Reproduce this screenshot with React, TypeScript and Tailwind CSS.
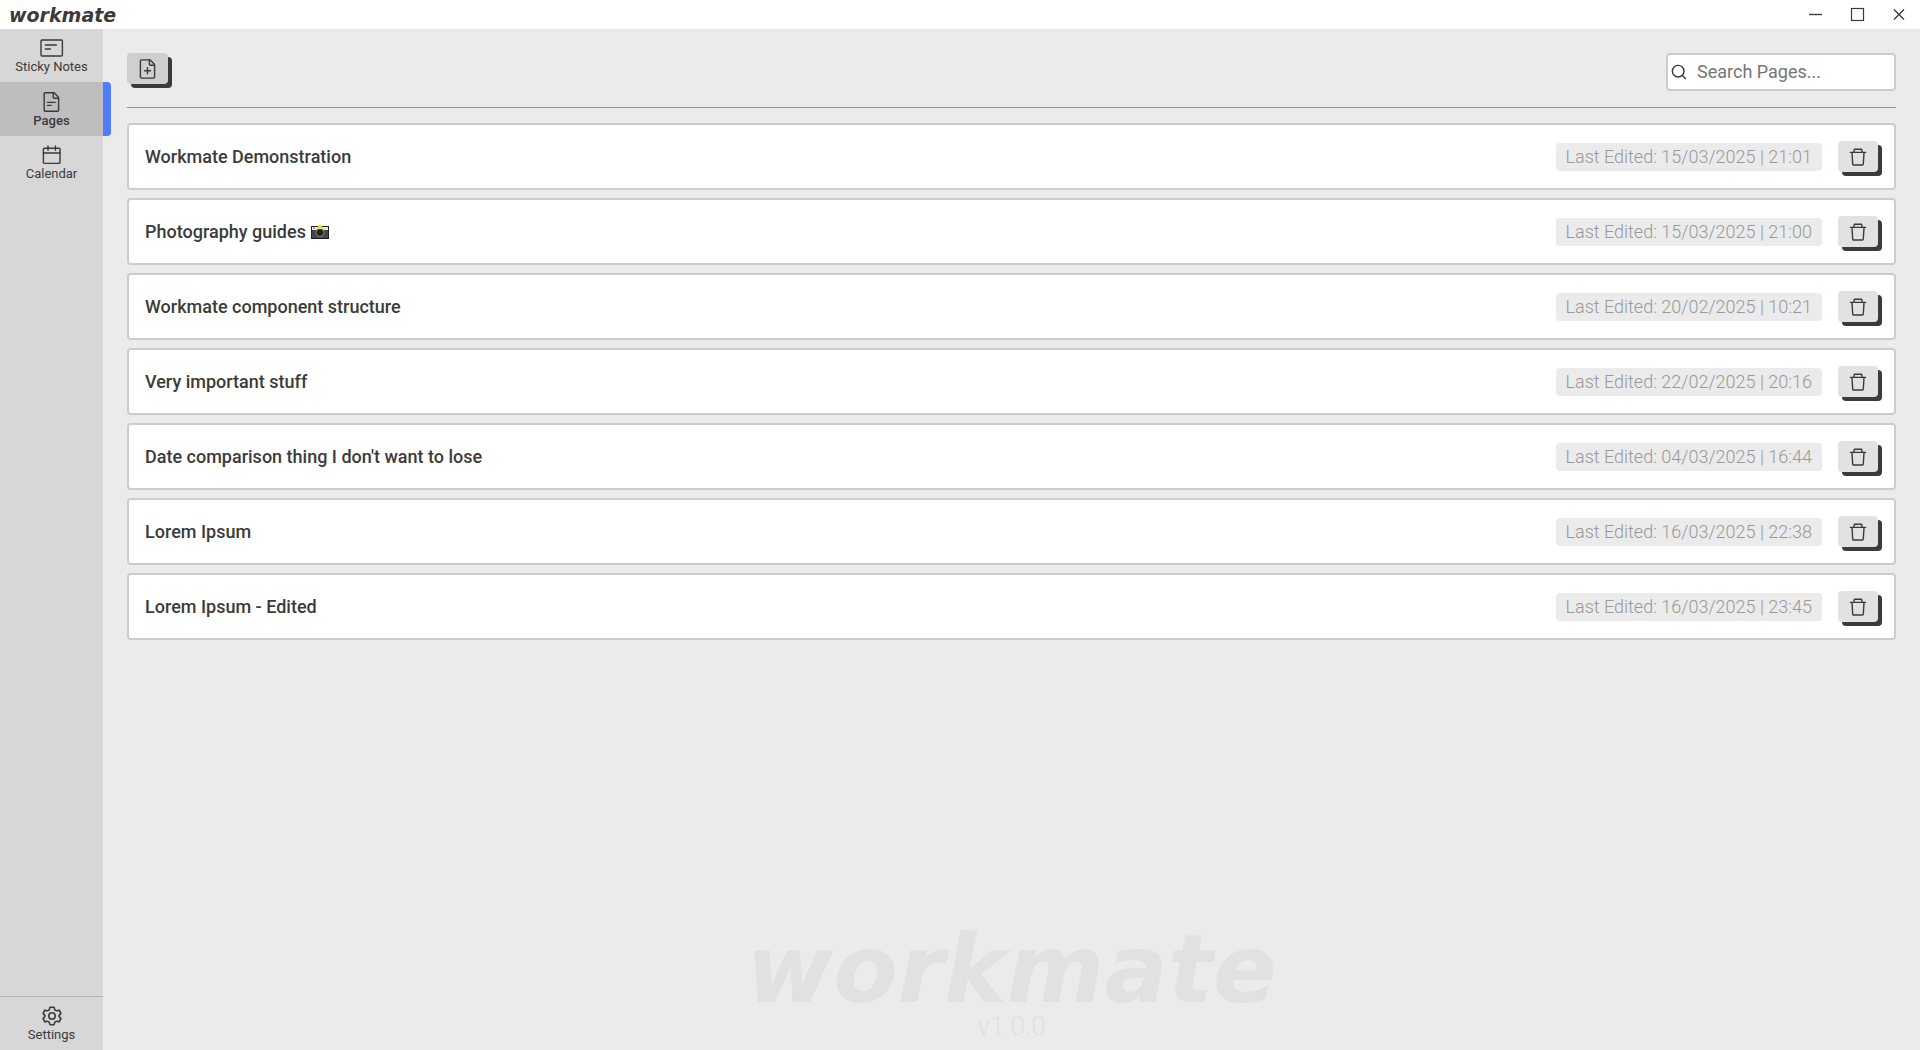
import React from "react";

const iconProps = {
  fill: "none",
  stroke: "currentColor",
  strokeWidth: 1.4,
  strokeLinecap: "round" as const,
  strokeLinejoin: "round" as const,
  "aria-hidden": true,
};

const StickyIcon = () => (
  <svg width="24" height="20" viewBox="0 0 24 20" {...iconProps}>
    <rect x="1" y="2" width="21.4" height="16" rx="1" />
    <path d="M5.4 7h11M5.4 11h5" />
  </svg>
);

const PageIcon = () => (
  <svg width="20" height="20" viewBox="0 0 20 20" {...iconProps}>
    <path d="M3.2.8h9l4.4 4.6v12.8a1 1 0 0 1-1 1H3.2a1 1 0 0 1-1-1V1.8a1 1 0 0 1 1-1z" />
    <path d="M11.2 1v4.2a1 1 0 0 0 1 1h4.2M5.6 10.4h7.6M5.6 13.4h3.6" />
  </svg>
);

const CalendarIcon = () => (
  <svg width="20" height="20" viewBox="0 0 20 20" {...iconProps}>
    <rect x="1.4" y="3.2" width="16.6" height="15.2" rx="1" />
    <path d="M1.4 8h16.6M6 1v4.2M13.4 1v4.2" />
  </svg>
);

const GearIcon = () => (
  <svg width="20" height="20" viewBox="0 0 20 20" {...iconProps} strokeWidth={1.6}>
    <circle cx="10" cy="10" r="3.2" />
    <path d="M8.4 1.2h3.2q.5 0 .6.6l.4 1.6q.1.4.5.6l1 .6q.4.2.8.1l1.6-.5q.5-.2.8.3l1.4 2.5q.3.5-.1.9l-1.2 1.2q-.3.3-.3.7v.4q0 .4.3.7l1.2 1.2q.4.4.1.9l-1.4 2.5q-.3.5-.8.3l-1.6-.5q-.4-.1-.8.1l-1 .6q-.4.2-.5.6l-.4 1.6q-.1.6-.6.6H8.4q-.5 0-.6-.6l-.4-1.6q-.1-.4-.5-.6l-1-.6q-.4-.2-.8-.1l-1.6.5q-.5.2-.8-.3l-1.4-2.5q-.3-.5.1-.9l1.2-1.2q.3-.3.3-.7v-.4q0-.4-.3-.7L1.4 7.9q-.4-.4-.1-.9l1.4-2.5q.3-.5.8-.3l1.6.5q.4.1.8-.1l1-.6q.4-.2.5-.6l.4-1.6q.1-.6.6-.6z" />
  </svg>
);

const FilePlusIcon = () => (
  <svg width="20" height="20" viewBox="0 0 20 20" {...iconProps}>
    <path d="M3.4.9h8.8l4.4 4.5v12.7a1 1 0 0 1-1 1H3.4a1 1 0 0 1-1-1V1.9a1 1 0 0 1 1-1z" />
    <path d="M11.4 1v4.2a1 1 0 0 0 1 1h4M9.5 8.8v6M6.5 11.8h6" />
  </svg>
);

const TrashIcon = () => (
  <svg width="18" height="18" viewBox="0 0 18 18" {...iconProps}>
    <path d="M1.4 4.4h15.2M4.8 4.2l.6-3h7.2l.6 3M3 4.6L3.7 16a1 1 0 0 0 1 1h8.6a1 1 0 0 0 1-1L15 4.6" />
  </svg>
);

const SearchIcon = () => (
  <svg width="16" height="16" viewBox="0 0 16 16" {...iconProps}>
    <circle cx="7.2" cy="7.2" r="5.8" />
    <path d="M11.4 11.4l3 3" />
  </svg>
);

const CameraIcon = () => (
  <svg width="20" height="16" viewBox="0 0 20 16" role="img" aria-label="camera">
    <rect x="1" y="2" width="18" height="13" fill="#222" />
    <rect x="2" y="3" width="16" height="3" fill="#e8e8e8" />
    <rect x="2" y="6" width="16" height="8" fill="#444" />
    <rect x="3" y="3" width="2" height="2" fill="#d99" />
    <circle cx="10" cy="8.6" r="4" fill="#222" stroke="#8a8a8a" strokeWidth="1" />
    <rect x="8" y="1" width="4" height="4" rx="1" fill="#f2e600" />
  </svg>
);

const pages = [
  { title: "Workmate Demonstration", edited: "15/03/2025 | 21:01" },
  { title: "Photography guides", camera: true, edited: "15/03/2025 | 21:00" },
  { title: "Workmate component structure", edited: "20/02/2025 | 10:21" },
  { title: "Very important stuff", edited: "22/02/2025 | 20:16" },
  { title: "Date comparison thing I don't want to lose", edited: "04/03/2025 | 16:44" },
  { title: "Lorem Ipsum", edited: "16/03/2025 | 22:38" },
  { title: "Lorem Ipsum - Edited", edited: "16/03/2025 | 23:45" },
];

function NavItem({ icon, label, active }: { icon: React.ReactNode; label: string; active?: boolean }) {
  return (
    <button
      type="button"
      aria-current={active ? "page" : undefined}
      className={
        active
          ? "relative flex h-[54px] w-full flex-col items-center justify-center gap-px bg-[#bebebe] pt-0.5 text-[13px] leading-4 font-medium"
          : "relative flex h-[53px] w-full flex-col items-center justify-center gap-px pt-0.5 text-[13px] leading-4"
      }
    >
      {icon}
      <span>{label}</span>
      {active && <span className="absolute top-0 left-full h-full w-2 rounded-r bg-[#4d7cff]" />}
    </button>
  );
}

export default function App() {
  return (
    <div className="flex min-h-screen flex-col bg-[#ebebeb] font-['Roboto',sans-serif] text-[#3b3b3b]">
      <header className="flex h-[29px] items-center justify-between bg-white pr-3 pl-[9px]">
        <span className="font-['DejaVu_Sans',sans-serif] text-[19px] leading-6 font-bold italic">workmate</span>
        <div className="flex items-center gap-6">
          <button type="button" aria-label="Minimize" className="flex h-5 w-[18px] items-center justify-center">
            <svg width="18" height="18" viewBox="0 0 18 18" stroke="currentColor" fill="none"><path d="M3 8.5h13" strokeWidth="1.4" /></svg>
          </button>
          <button type="button" aria-label="Maximize" className="flex h-5 w-[18px] items-center justify-center">
            <svg width="18" height="18" viewBox="0 0 18 18" stroke="currentColor" fill="none"><rect x="3.5" y="2.5" width="12" height="12" strokeWidth="1.2" /></svg>
          </button>
          <button type="button" aria-label="Close" className="flex h-5 w-[18px] items-center justify-center">
            <svg width="18" height="18" viewBox="0 0 18 18" stroke="currentColor" fill="none"><path d="M4 3.5l10 10M14 3.5l-10 10" strokeWidth="1.4" /></svg>
          </button>
        </div>
      </header>

      <div className="flex flex-1">
        <nav className="flex w-[103px] shrink-0 flex-col justify-between bg-[#d7d7d7]">
          <div>
            <NavItem icon={<StickyIcon />} label="Sticky Notes" />
            <NavItem icon={<PageIcon />} label="Pages" active />
            <NavItem icon={<CalendarIcon />} label="Calendar" />
          </div>
          <div className="border-t border-[#b4b4b4]">
            <NavItem icon={<GearIcon />} label="Settings" />
          </div>
        </nav>

        <main className="flex min-w-0 flex-1 flex-col px-6 pt-6">
          <div className="flex items-start justify-between border-b border-[#999] pb-4">
            <button
              type="button"
              aria-label="New page"
              className="flex h-[31px] w-[41px] items-center justify-center rounded bg-[#cfcfcf] shadow-[4px_4px_0_#3b3b3b]"
            >
              <FilePlusIcon />
            </button>
            <label className="flex h-[38px] w-[230px] items-center gap-[10px] rounded border-2 border-[#ccc] bg-white pl-[3px]">
              <SearchIcon />
              <input
                type="text"
                aria-label="Search pages"
                placeholder="Search Pages..."
                className="min-w-0 flex-1 bg-transparent text-[18px] leading-6 outline-none placeholder:text-[#757575]"
              />
            </label>
          </div>

          <ul className="mt-[15px] flex flex-col gap-2">
            {pages.map((page) => (
              <li
                key={page.title}
                className="flex h-[67px] items-center gap-4 rounded border-2 border-[#ccc] bg-white pr-4 pl-4"
              >
                <a href="#" className="flex min-w-0 flex-1 items-center gap-1 text-[18px] leading-6 font-medium">
                  {page.title}
                  {page.camera && <CameraIcon />}
                </a>
                <span className="rounded bg-[#ebebeb] px-[10px] py-0.5 text-[18px] leading-6 font-light text-[#999]">
                  Last Edited: {page.edited}
                </span>
                <button
                  type="button"
                  aria-label={`Delete ${page.title}`}
                  className="flex h-[31px] w-10 items-center justify-center rounded bg-[#e2e2e2] shadow-[4px_4px_0_#3b3b3b]"
                >
                  <TrashIcon />
                </button>
              </li>
            ))}
          </ul>

          <div className="mt-auto flex flex-col items-center pb-2 text-[#e1e1e1]">
            <span className="font-['DejaVu_Sans',sans-serif] text-[94px] leading-[80px] font-bold italic">workmate</span>
            <span className="text-[26px] leading-8 font-light">v1.0.0</span>
          </div>
        </main>
      </div>
    </div>
  );
}
